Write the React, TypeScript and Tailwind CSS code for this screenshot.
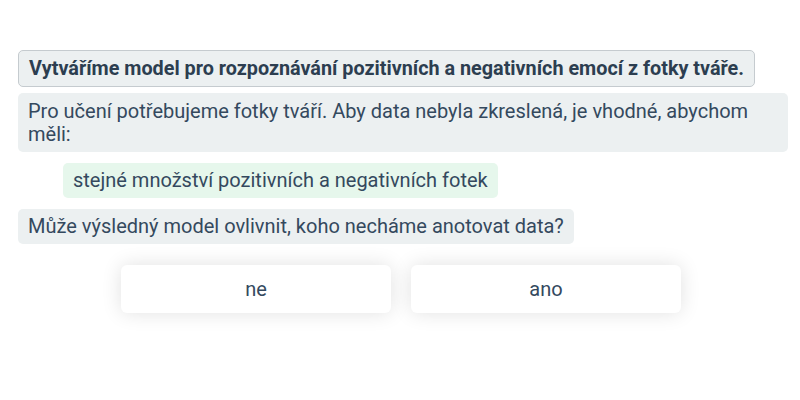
export default function App() {
  return (
    <div
      className="w-[800px] h-[400px] bg-white text-[#34495e] pl-[18px] pr-[12px] pt-[50px]"
      style={{ fontFamily: "Roboto, 'Noto Sans', sans-serif" }}
    >
      <div className="flex flex-col items-start">
        <div className="border border-[#c5cbcf] bg-[#ecf0f1] rounded-[5px] px-[10px] py-[6px] text-[19.8px] leading-[23px] font-bold text-[#2c3e50]">
          Vytváříme model pro rozpoznávání pozitivních a negativních emocí z fotky tváře.
        </div>
        <div className="mt-[6px] w-full bg-[#ecf0f1] rounded-[5px] px-[10px] py-[6.5px] text-[20px] leading-[23px]">
          Pro učení potřebujeme fotky tváří. Aby data nebyla zkreslená, je vhodné, abychom
          měli:
        </div>
        <div className="mt-[11px] ml-[45px] bg-[#e6f7ec] rounded-[5px] px-[10px] py-[6px] text-[20px] leading-[23px]">
          stejné množství pozitivních a negativních fotek
        </div>
        <div className="mt-[11px] bg-[#ecf0f1] rounded-[5px] px-[10px] py-[6px] text-[20px] leading-[23px]">
          Může výsledný model ovlivnit, koho necháme anotovat data?
        </div>
      </div>
      <div className="mt-[21px] flex justify-center gap-[20px] pr-[4px]">
        <button className="w-[270px] h-[48px] bg-white rounded-[6px] shadow-[0_0_20px_rgba(0,0,0,0.12)] text-[20px] text-[#34495e]">
          ne
        </button>
        <button className="w-[270px] h-[48px] bg-white rounded-[6px] shadow-[0_0_20px_rgba(0,0,0,0.12)] text-[20px] text-[#34495e]">
          ano
        </button>
      </div>
    </div>
  );
}
